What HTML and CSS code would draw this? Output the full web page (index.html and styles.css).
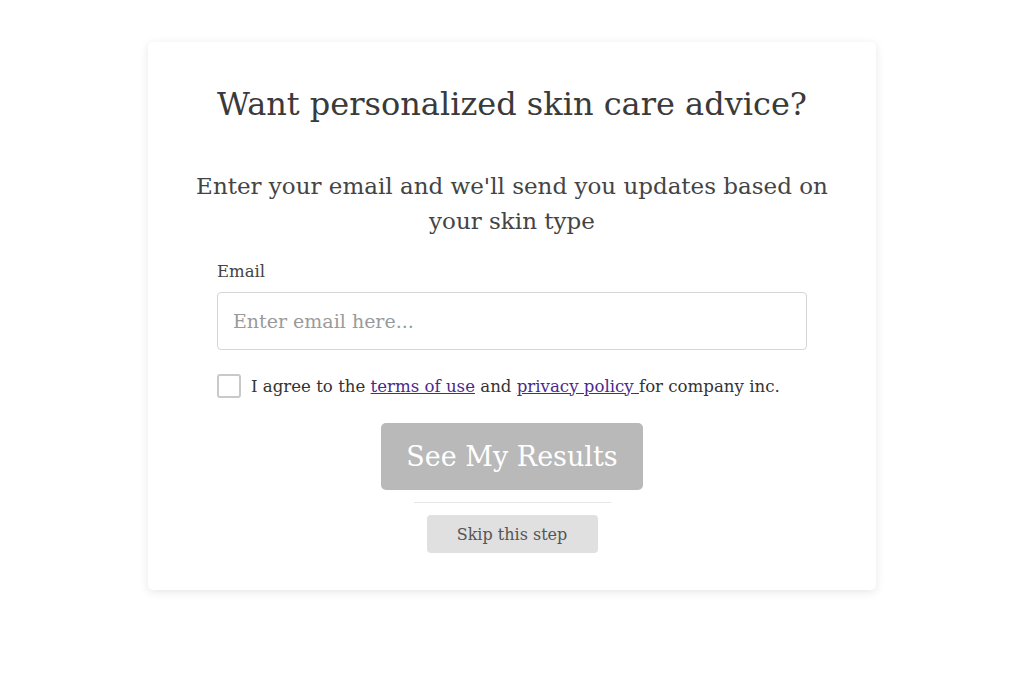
FILE: index.html
```html
<!DOCTYPE html>
<html>
<head>
  <meta charset="UTF-8">
  <title>Skin Care Advice</title>
  <link rel="stylesheet" href="styles.css">
</head>
<body>
  <div class="card">
    <h1>Want personalized skin care advice?</h1>
    <p class="lead">Enter your email and we'll send you updates based on your skin type</p>

    <form class="signup">
      <label for="email" class="field-label">Email</label>
      <input type="email" id="email" name="email" placeholder="Enter email here...">

      <label class="agree">
        <input type="checkbox" name="agree">
        <span class="box"></span>
        <span>I agree to the <a href="#">terms of use</a> and <a href="#">privacy policy </a>for company inc.</span>
      </label>

      <div class="actions">
        <button type="button" class="primary">See My Results</button>
        <hr>
        <button type="button" class="skip">Skip this step</button>
      </div>
    </form>
  </div>
</body>
</html>
```

FILE: styles.css
```css
body {
  margin: 0;
  padding-bottom: 40px;
  background-color: #fff;
  font-family: "DejaVu Serif", serif;
  color: #333;
}
.card {
  width: 728px;
  margin: 42px auto 0;
  padding: 40px 0 37px;
  box-sizing: border-box;
  background-color: #fff;
  border-radius: 5px;
  box-shadow: 0 2px 10px rgba(0, 0, 0, 0.1);
  text-align: center;
}
h1 {
  margin: 0;
  font-size: 32px;
  font-weight: normal;
  line-height: 44px;
  color: #3a3a3a;
}
.lead {
  width: 640px;
  margin: 43px auto 0;
  font-size: 23px;
  line-height: 35px;
  color: #444;
}
.signup {
  width: 590px;
  margin: 22px auto 0;
  text-align: left;
}
.field-label {
  display: block;
  font-size: 16.5px;
  line-height: 22px;
  color: #444;
}
input[type="email"] {
  display: block;
  width: 100%;
  height: 58px;
  margin-top: 9px;
  padding: 0 15px;
  box-sizing: border-box;
  border: 1px solid #d6d6d6;
  border-radius: 4px;
  font-family: inherit;
  font-size: 19px;
  color: #333;
}
input[type="email"]::placeholder {
  color: #9a9a9a;
}
.agree {
  display: flex;
  align-items: center;
  gap: 10px;
  margin-top: 24px;
  font-size: 16.6px;
  color: #333;
}
.agree input {
  display: none;
}
.agree .box {
  width: 20px;
  height: 20px;
  flex: none;
  border: 2px solid #c9c9c9;
  border-radius: 3px;
}
.agree a {
  color: #4a2a8c;
}
.actions {
  display: flex;
  flex-direction: column;
  align-items: center;
  margin-top: 25px;
}
.primary {
  width: 262px;
  height: 67px;
  border: none;
  border-radius: 5px;
  background-color: #b9b9b9;
  color: #fff;
  font-family: inherit;
  font-size: 27px;
  cursor: pointer;
}
hr {
  width: 197px;
  margin: 12px 0;
  border: none;
  border-top: 1px solid #e6e6e6;
}
.skip {
  width: 171px;
  height: 38px;
  border: none;
  border-radius: 4px;
  background-color: #e0e0e0;
  color: #555;
  font-family: inherit;
  font-size: 16px;
  cursor: pointer;
}
```
